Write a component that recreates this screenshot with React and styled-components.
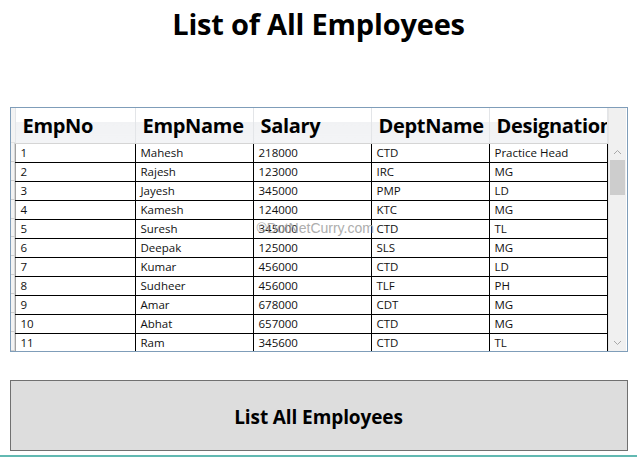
import React from 'react';
import styled, { createGlobalStyle } from 'styled-components';

const employees = [
  [1, 'Mahesh', 218000, 'CTD', 'Practice Head'],
  [2, 'Rajesh', 123000, 'IRC', 'MG'],
  [3, 'Jayesh', 345000, 'PMP', 'LD'],
  [4, 'Kamesh', 124000, 'KTC', 'MG'],
  [5, 'Suresh', 345000, 'CTD', 'TL'],
  [6, 'Deepak', 125000, 'SLS', 'MG'],
  [7, 'Kumar', 456000, 'CTD', 'LD'],
  [8, 'Sudheer', 456000, 'TLF', 'PH'],
  [9, 'Amar', 678000, 'CDT', 'MG'],
  [10, 'Abhat', 657000, 'CTD', 'MG'],
  [11, 'Ram', 345600, 'CTD', 'TL'],
];

const columns = ['EmpNo', 'EmpName', 'Salary', 'DeptName', 'Designation'];

function App() {
  return (
    <Page>
      <GlobalStyle />
      <Title>List of All Employees</Title>
      <GridFrame>
        <RowHeaders>
          <RowHeaderTop />
          {employees.map(e => <RowHeaderCell key={e[0]} />)}
        </RowHeaders>
        <TableClip>
          <Table>
            <thead>
              <tr>
                {columns.map(c => <HeadCell key={c}>{c}</HeadCell>)}
              </tr>
            </thead>
            <tbody>
              {employees.map(e => (
                <tr key={e[0]}>
                  {e.map((v, i) => <Cell key={i}>{v}</Cell>)}
                </tr>
              ))}
            </tbody>
          </Table>
        </TableClip>
        <ScrollBar>
          <ScrollTopFill />
          <Arrow>
            <svg width="9" height="6" viewBox="0 0 9 6"><path d="M1 5 L4.5 1.5 L8 5" fill="none" stroke="#a8a8a8" strokeWidth="1" /></svg>
          </Arrow>
          <Thumb />
          <Track />
          <Arrow>
            <svg width="9" height="6" viewBox="0 0 9 6"><path d="M1 1 L4.5 4.5 L8 1" fill="none" stroke="#a8a8a8" strokeWidth="1" /></svg>
          </Arrow>
        </ScrollBar>
        <Watermark>©DotNetCurry.com</Watermark>
      </GridFrame>
      <ListButton>List All Employees</ListButton>
    </Page>
  );
}

const GlobalStyle = createGlobalStyle`
  body {
    margin: 0;
    background: #ffffff;
    font-family: "Open Sans", "Noto Sans", sans-serif;
  }
`;

const Page = styled.div`
  width: 637px;
  height: 457px;
  box-sizing: border-box;
  border-bottom: 2px solid #62b9b2;
  display: flex;
  flex-direction: column;
  align-items: center;
`;

const Title = styled.h1`
  margin: 0;
  height: 107px;
  padding-top: 4px;
  box-sizing: border-box;
  font-size: 29px;
  font-weight: 700;
  letter-spacing: -0.2px;
  color: #000;
`;

const GridFrame = styled.div`
  position: relative;
  width: 618px;
  height: 245px;
  box-sizing: border-box;
  border: 1px solid #7f9db9;
  display: flex;
  background: #fff;
`;

const RowHeaders = styled.div`
  width: 5px;
  display: flex;
  flex-direction: column;
  background: #f3f3f3;
`;

const RowHeaderTop = styled.div`
  height: 35px;
  box-sizing: border-box;
  border-bottom: 1px solid #e2e2e2;
`;

const RowHeaderCell = styled.div`
  height: 19px;
  box-sizing: border-box;
  border-bottom: 1px solid #cfcfcf;
  border-right: 1px solid #d8d8d8;
`;

const TableClip = styled.div`
  width: 593px;
  overflow: hidden;
`;

const Table = styled.table`
  border-collapse: collapse;
  table-layout: fixed;
  width: 593px;
`;

const HeadCell = styled.th`
  width: 118px;
  height: 35px;
  padding: 0 0 0 6px;
  box-sizing: border-box;
  text-align: left;
  white-space: nowrap;
  overflow: hidden;
  font-size: 20px;
  font-weight: 700;
  letter-spacing: -0.3px;
  color: #000;
  background: linear-gradient(#ffffff 0%, #ffffff 40%, #f1f2f4 40%, #f3f4f6 100%);
  border-right: 1px solid #e3e5e8;
  border-bottom: 1px solid #d5d5d5;
  &:first-child {
    width: 120px;
    border-left: 1px solid #e3e5e8;
  }
`;

const Cell = styled.td`
  height: 19px;
  padding: 0 0 0 4px;
  box-sizing: border-box;
  font-size: 11.5px;
  line-height: 18px;
  color: #111;
  white-space: nowrap;
  overflow: hidden;
  border-right: 1px solid #000;
  border-bottom: 1px solid #000;
  &:first-child {
    border-left: 1px solid #a0a0a0;
  }
`;

const ScrollBar = styled.div`
  width: 18px;
  display: flex;
  flex-direction: column;
  background: #f0f0f0;
  border-left: 1px solid #e6e6e6;
`;

const ScrollTopFill = styled.div`
  height: 35px;
`;

const Arrow = styled.div`
  height: 17px;
  display: flex;
  align-items: center;
  justify-content: center;
`;

const Thumb = styled.div`
  height: 35px;
  margin: 0 1px;
  background: #cdcdcd;
`;

const Track = styled.div`
  flex: 1;
`;

const Watermark = styled.div`
  position: absolute;
  left: 246px;
  top: 112px;
  font-family: "Liberation Sans", Arial, sans-serif;
  font-size: 14px;
  color: #a0a0a0;
  opacity: 0.85;
  pointer-events: none;
`;

const ListButton = styled.button`
  margin-top: 28px;
  width: 618px;
  height: 71px;
  box-sizing: border-box;
  border: 1px solid #707070;
  background: #dddddd;
  font-family: "Open Sans", "Noto Sans", sans-serif;
  font-size: 19px;
  font-weight: 700;
  letter-spacing: -0.1px;
  color: #000;
  padding-top: 3px;
`;

export default App;
